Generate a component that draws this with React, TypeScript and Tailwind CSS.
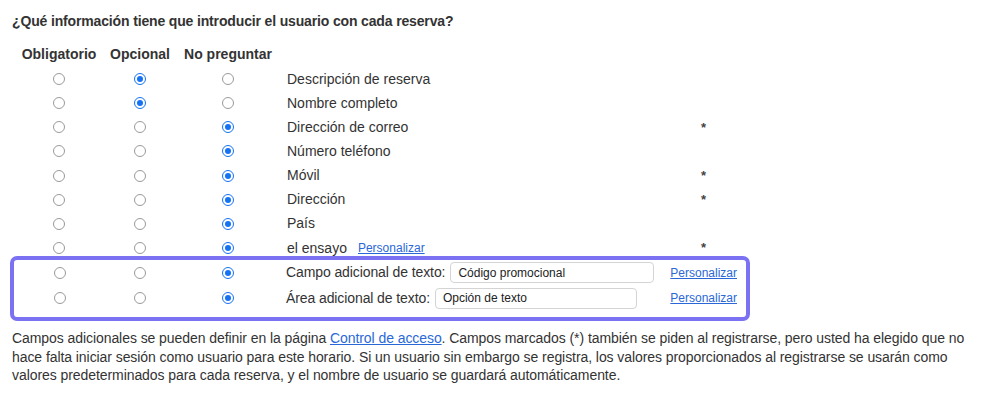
import React from "react";

function Radio({ checked }: { checked?: boolean }) {
  return checked ? (
    <span className="flex h-[12px] w-[12px] items-center justify-center rounded-full border-[1.5px] border-[#1672f3] bg-white">
      <span className="block h-[6px] w-[6px] rounded-full bg-[#1672f3]" />
    </span>
  ) : (
    <span className="block h-[12px] w-[12px] rounded-full border border-[#9a9a9a] bg-white" />
  );
}

type Row = { label: React.ReactNode; sel: 0 | 1 | 2; star?: boolean };

const rows: Row[] = [
  { label: "Descripción de reserva", sel: 1 },
  { label: "Nombre completo", sel: 1 },
  { label: "Dirección de correo", sel: 2, star: true },
  { label: "Número teléfono", sel: 2 },
  { label: "Móvil", sel: 2, star: true },
  { label: "Dirección", sel: 2, star: true },
  { label: "País", sel: 2 },
  {
    label: (
      <span className="flex items-center">
        <span>el ensayo</span>
        <a href="#" className="ml-[11px] text-[12px] text-[#2a68d8] underline">
          Personalizar
        </a>
      </span>
    ),
    sel: 2,
    star: true,
  },
];

function Radios({ sel }: { sel: number }) {
  return (
    <>
      {[0, 1, 2].map((i) => (
        <div key={i} className="flex items-center justify-center">
          <Radio checked={sel === i} />
        </div>
      ))}
    </>
  );
}

export default function App() {
  return (
    <div className="min-h-[399px] w-[984px] bg-white pl-[12px] pt-[11px] font-['Liberation_Sans',Arial,sans-serif] text-[14px] text-[#333]">
      <h2 className="text-[14px] font-bold leading-[20px] tracking-[-0.15px] text-[#333]">
        ¿Qué información tiene que introducir el usuario con cada reserva?
      </h2>

      <div className="mt-[11px] grid grid-cols-[94px_68px_108px_416px_40px]">
        <div className="flex h-[25px] items-center justify-center font-bold">Obligatorio</div>
        <div className="flex h-[25px] items-center justify-center font-bold">Opcional</div>
        <div className="flex h-[25px] items-center justify-center font-bold">No preguntar</div>
        <div />
        <div />
        {rows.map((r, idx) => (
          <React.Fragment key={idx}>
            <Radios sel={r.sel} />
            <div className="flex h-[24.15px] items-center pl-[5px]">{r.label}</div>
            <div className="flex h-[24.15px] items-center pl-[3px] text-[13px] font-bold text-[#444]">
              {r.star ? "*" : ""}
            </div>
          </React.Fragment>
        ))}
      </div>

      <div className="-ml-[2px] -mt-[4px] w-[740px] rounded-[7px] border-4 border-[#7a72f2] pb-[6px]">
        <div className="grid grid-cols-[92px_68px_108px_1fr]">
          <Radios sel={2} />
          <div className="flex h-[25px] items-center pl-[4px] pr-[9px]">
            <span className="tracking-[-0.1px]">Campo adicional de texto:</span>
            <span className="ml-[5px] flex h-[21px] w-[204px] items-center rounded-[4px] border border-[#d4d4d4] pl-[7px] text-[12px] text-[#222]">
              Código promocional
            </span>
            <a href="#" className="ml-auto text-[12px] text-[#2a68d8] underline">
              Personalizar
            </a>
          </div>
          <div className="col-span-4 grid h-[26px] grid-cols-[92px_68px_108px_1fr]">
            <Radios sel={2} />
            <div className="flex items-center pl-[4px] pr-[9px]">
              <span className="tracking-[-0.1px]">Área adicional de texto:</span>
              <span className="ml-[5px] flex h-[21px] w-[202px] items-center rounded-[4px] border border-[#d4d4d4] pl-[7px] text-[12px] text-[#222]">
                Opción de texto
              </span>
              <a href="#" className="ml-auto text-[12px] text-[#2a68d8] underline">
                Personalizar
              </a>
            </div>
          </div>
        </div>
      </div>

      <p className="mt-[8px] whitespace-nowrap text-[14px] leading-[18.5px] tracking-[-0.07px] text-[#333]">
        Campos adicionales se pueden definir en la página{" "}
        <a href="#" className="text-[#2a68d8] underline">
          Control de acceso
        </a>
        . Campos marcados (*) también se piden al registrarse, pero usted ha elegido que no
        <br />
        hace falta iniciar sesión como usuario para este horario. Si un usuario sin embargo se registra, los valores proporcionados al registrarse se usarán como
        <br />
        valores predeterminados para cada reserva, y el nombre de usuario se guardará automáticamente.
      </p>
    </div>
  );
}
